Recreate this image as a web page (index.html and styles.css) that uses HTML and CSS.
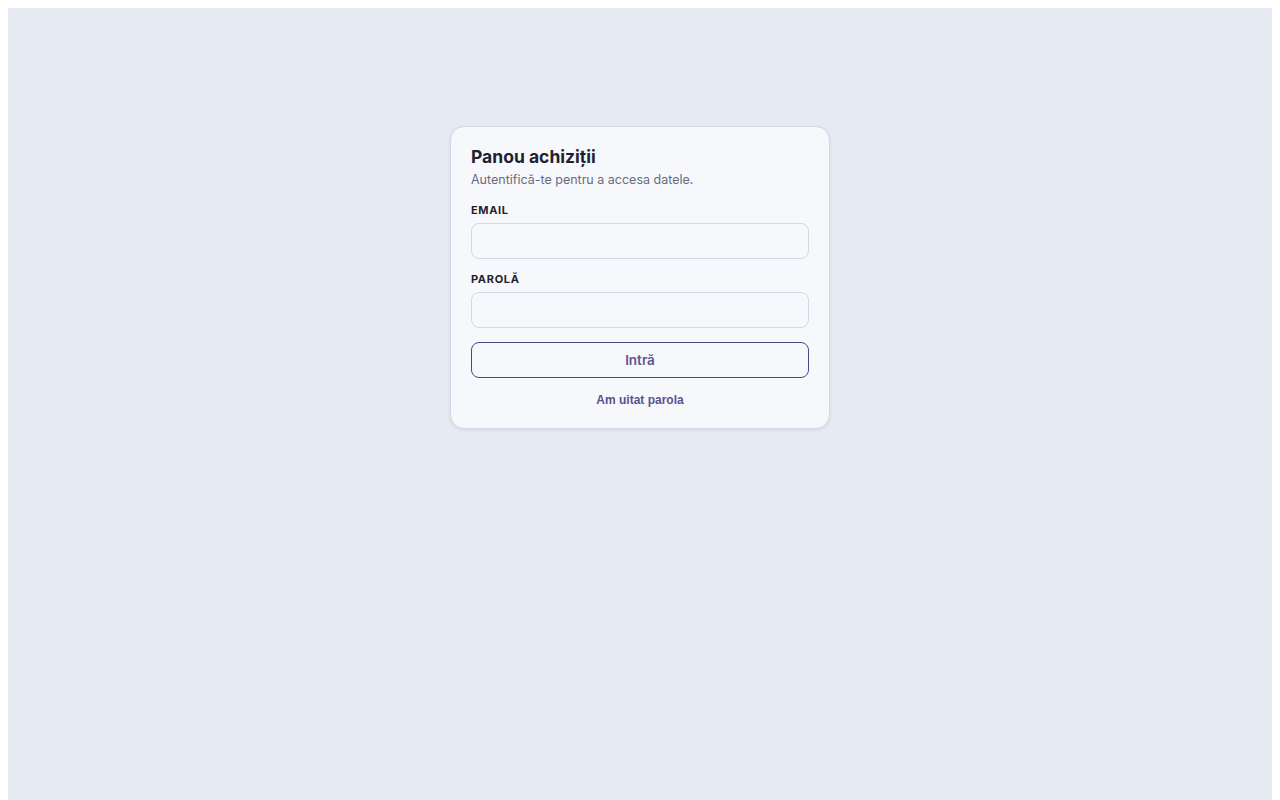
FILE: index.html
```html
<!DOCTYPE html>
<html lang="ro">
<head>
<meta charset="utf-8">
<title>Panou achiziții</title>
<link rel="stylesheet" href="styles.css">
</head>
<body>
<div class="page">
  <form class="card">
    <h1 class="title">Panou achiziții</h1>
    <p class="subtitle">Autentifică-te pentru a accesa datele.</p>
    <div class="field">
      <label class="label" for="email">EMAIL</label>
      <input class="input" id="email" type="email">
    </div>
    <div class="field">
      <label class="label" for="pass">PAROLĂ</label>
      <input class="input" id="pass" type="password">
    </div>
    <button class="btn" type="button">Intră</button>
    <button class="link" type="button">Am uitat parola</button>
  </form>
</div>
</body>
</html>
```
FILE: styles.css
```css
html { background: #ffffff; }
body {
  margin: 8px;
  font-family: Inter, "Noto Sans", sans-serif;
}
.page {
  min-height: 100vh;
  background: #e6eaf3;
  display: flex;
  justify-content: center;
  align-items: flex-start;
  padding-top: 118px;
  box-sizing: border-box;
}
.card {
  width: 380px;
  box-sizing: border-box;
  background: #f7f8fc;
  border: 1px solid #d4d8e4;
  border-radius: 14px;
  box-shadow: 0 1px 3px rgba(30, 40, 70, 0.10);
  padding: 20px;
  display: flex;
  flex-direction: column;
}
.title {
  margin: 0;
  font-size: 17.5px;
  line-height: 20px;
  font-weight: 700;
  color: #1f2230;
}
.subtitle {
  margin: 4px 0 0;
  font-size: 12.5px;
  line-height: 18px;
  color: #676c7c;
}
.field {
  display: flex;
  flex-direction: column;
  margin-top: 14px;
}
.field + .field { margin-top: 13px; }
.label {
  font-size: 11px;
  line-height: 14px;
  font-weight: 700;
  letter-spacing: 0.06em;
  color: #1f2230;
  margin-bottom: 6px;
}
.input {
  height: 36px;
  box-sizing: border-box;
  border: 1px solid #d4d8e4;
  border-radius: 8px;
  background: #f7f8fc;
  padding: 0 10px;
  font: inherit;
  font-size: 13px;
}
.btn {
  margin-top: 14px;
  height: 36px;
  border: 1px solid #4a4680;
  border-radius: 8px;
  background: transparent;
  color: #5a5490;
  font-family: Inter, "Noto Sans", sans-serif;
  font-size: 13.5px;
  font-weight: 600;
  cursor: pointer;
}
.link {
  margin-top: 14px;
  align-self: center;
  border: 0;
  background: none;
  padding: 0;
  font-family: "Liberation Sans", Arial, sans-serif;
  font-size: 12px;
  line-height: 16px;
  font-weight: 700;
  color: #5b5191;
  cursor: pointer;
}
```
